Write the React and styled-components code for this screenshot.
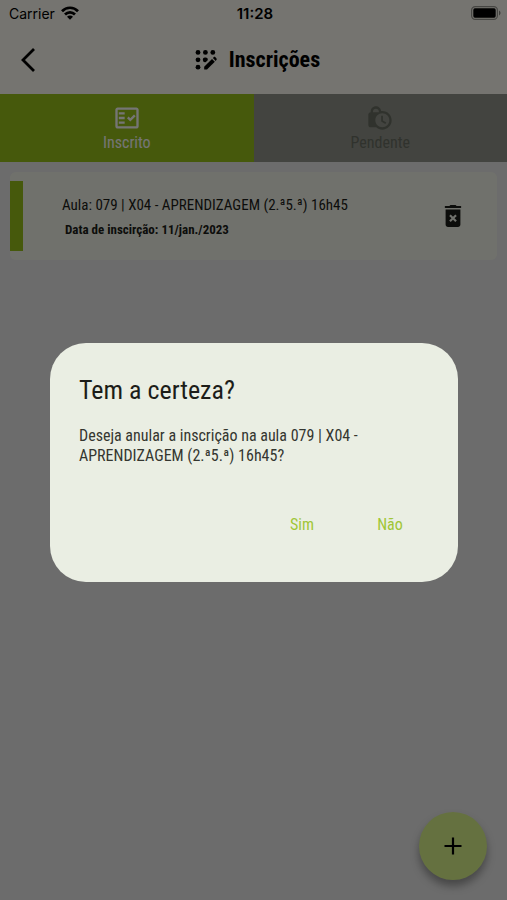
import React from 'react'
import styled, { createGlobalStyle, ThemeProvider } from 'styled-components'
import { MdLockClock, MdOutlineFactCheck } from 'react-icons/md'

const theme = {
  font: "'Roboto Condensed', 'Open Sans Condensed', 'DejaVu Sans Condensed', sans-serif",
  systemFont: "Inter, 'Liberation Sans', sans-serif",
  colors: {
    page: '#ebebeb',
    header: '#fffdf3',
    card: '#f5f7eb',
    tab: '#92958b',
    tabText: '#696e63',
    primary: '#9ac31c',
    primarySoft: '#dcf68c',
    action: '#a0c636',
    dialog: '#eaeee3',
    text: '#1c1d19',
    textSoft: '#343630',
    scrim: 'rgba(0, 0, 0, 0.54)'
  }
}

const GlobalStyle = createGlobalStyle`
  * {
    box-sizing: border-box;
  }

  body {
    margin: 0;
    background-color: ${theme.colors.page};
    color: ${theme.colors.text};
    font-family: ${theme.font};
    font-size: 16px;
  }

  h1, h2, p {
    margin: 0;
    font-weight: 400;
  }
`

const Page = styled.div`
  min-height: 100vh;
`

const Top = styled.header`
  background-color: ${props => props.theme.colors.header};
  color: #000;
`

const StatusBar = styled.div`
  display: grid;
  grid-template-columns: 1fr auto 1fr;
  align-items: center;
  height: 26px;
  padding: 0 6px 0 9px;
  font-family: ${props => props.theme.systemFont};
  font-size: 14px;
`

const Carrier = styled.span`
  display: flex;
  align-items: center;
  gap: 6px;
`

const Time = styled.span`
  font-size: 15px;
  font-weight: 600;
`

const Battery = styled.svg`
  justify-self: end;
`

const AppBar = styled.div`
  display: grid;
  grid-template-columns: 56px 1fr 48px;
  align-items: center;
  height: 68px;
`

const IconButton = styled.button`
  display: flex;
  align-items: center;
  justify-content: center;
  width: 56px;
  height: 56px;
  padding: 0;
  border: none;
  background: none;
  color: inherit;
  cursor: pointer;
`

const Title = styled.h1`
  display: flex;
  align-items: center;
  justify-content: center;
  gap: 12px;
  font-size: 22px;
  font-weight: 700;
  line-height: 32px;
`

const Tabs = styled.div`
  display: flex;
`

const Tab = styled.button`
  display: flex;
  flex: 1;
  flex-direction: column;
  align-items: center;
  justify-content: center;
  height: 68px;
  padding: 2px 0 0;
  border: none;
  font-family: inherit;
  font-size: 16px;
  line-height: 22px;
  cursor: pointer;
  background-color: ${props =>
    props.$active ? props.theme.colors.primary : props.theme.colors.tab};
  color: ${props => (props.$active ? '#fff' : props.theme.colors.tabText)};
`

const List = styled.main`
  padding: 10px;
`

const Card = styled.article`
  display: flex;
  align-items: center;
  min-height: 88px;
  padding: 9px 16px 9px 0;
  border-radius: 6px;
  background-color: ${props => props.theme.colors.card};
`

const Marker = styled.span`
  align-self: stretch;
  width: 13px;
  background-color: ${props => props.theme.colors.primary};
`

const CardBody = styled.div`
  flex: 1;
  padding: 2px 0 0 39px;
`

const Lesson = styled.p`
  font-size: 15px;
  line-height: 26px;
`

const Enrolled = styled.p`
  padding-left: 3px;
  font-size: 13px;
  font-weight: 700;
  line-height: 24px;
`

const Fab = styled.button`
  position: fixed;
  right: 20px;
  bottom: 20px;
  display: flex;
  align-items: center;
  justify-content: center;
  width: 68px;
  height: 68px;
  padding: 0;
  border: none;
  border-radius: 50%;
  background-color: ${props => props.theme.colors.primarySoft};
  color: #000;
  box-shadow: 0 6px 8px rgba(0, 0, 0, 0.35);
  cursor: pointer;
`

const Scrim = styled.div`
  position: fixed;
  inset: 0;
  display: flex;
  align-items: center;
  justify-content: center;
  padding: 25px 49px 0 50px;
  background-color: ${props => props.theme.colors.scrim};
`

const Dialog = styled.section`
  width: 100%;
  max-width: 560px;
  padding: 30px 24px 34px 29px;
  border-radius: 36px;
  background-color: ${props => props.theme.colors.dialog};
`

const DialogTitle = styled.h2`
  font-size: 26px;
  line-height: 34px;
`

const DialogText = styled.p`
  max-width: 300px;
  margin-top: 19px;
  color: ${props => props.theme.colors.textSoft};
  line-height: 20px;
`

const Actions = styled.div`
  display: flex;
  justify-content: flex-end;
  margin-top: 34px;
`

const TextButton = styled.button`
  width: 88px;
  height: 48px;
  padding: 0;
  border: none;
  background: none;
  color: ${props => props.theme.colors.action};
  font-family: inherit;
  font-size: 16px;
  cursor: pointer;
`

const WifiIcon = () => (
  <svg width="18" height="14" viewBox="0 0 18 14" fill="none" stroke="currentColor" strokeWidth="2.7" aria-hidden="true">
    <path d="M1 5.2C5.4.6 12.6.6 17 5.2" />
    <path d="M4 8.5c2.8-2.9 7.2-2.9 10 0" />
    <path d="M9 13.8 6 10.8c1.6-1.6 4.4-1.6 6 0z" fill="currentColor" stroke="none" />
  </svg>
)

const BatteryIcon = () => (
  <Battery width="30" height="14" viewBox="0 0 30 14" aria-hidden="true">
    <rect x=".6" y=".6" width="25.8" height="12.8" rx="3.6" fill="none" stroke="#000" strokeOpacity=".4" strokeWidth="1.2" />
    <rect x="2.3" y="2.3" width="22.4" height="9.4" rx="1.6" />
    <path d="M28 4.6c2 .8 2 4 0 4.8z" fillOpacity=".45" />
  </Battery>
)

const BackIcon = () => (
  <svg width="16" height="26" viewBox="0 0 16 26" fill="none" stroke="currentColor" strokeWidth="2.8" aria-hidden="true">
    <path d="M14 2 3 13l11 11" />
  </svg>
)

const RegistrationIcon = () => (
  <svg width="22" height="22" viewBox="0 0 22 22" fill="currentColor" aria-hidden="true">
    <circle cx="3" cy="3.4" r="2.4" />
    <circle cx="10.4" cy="3.4" r="2.4" />
    <circle cx="17.8" cy="3.4" r="2.4" />
    <circle cx="3" cy="10.8" r="2.4" />
    <path d="M10.4 8.4a2.4 2.4 0 0 1 2.3 2.9L10.900 13.100A2.4 2.4 0 1 1 10.4 8.4z" />
    <circle cx="3" cy="18.2" r="2.4" />
    <path d="M9.200 20.600v-2.800l7.800-7.800 2.800 2.800-7.800 7.800z" />
    <path d="M17.900 9.100 18.900 8.100c.4-.4.9-.4 1.300 0L21.500 9.400c.4.4.4.9 0 1.300L20.700 11.900z" />
  </svg>
)

const TrashIcon = () => (
  <svg width="18" height="24" viewBox="0 0 18 24" fill="currentColor" aria-hidden="true">
    <path d="M1.4 1.9h4l1-.9h5.2l1 .9h4c.9 0 .9 2.1 0 2.1H1.4c-.9 0-.9-2.1 0-2.1z" />
    <path
      fillRule="evenodd"
      d="M1.6 5.6h14.8v15c0 1.4-1 2.4-2.4 2.4H4c-1.4 0-2.4-1-2.4-2.4zM6.7 10.4l-1.5 1.5L7.5 14.2l-2.3 2.3L6.7 18 9 15.7l2.3 2.3 1.5-1.5-2.3-2.3 2.3-2.3-1.5-1.5L9 12.7z"
    />
  </svg>
)

const PlusIcon = () => (
  <svg width="18" height="18" viewBox="0 0 18 18" stroke="currentColor" strokeWidth="2.2" aria-hidden="true">
    <path d="M9 .5v17M.5 9h17" />
  </svg>
)

const App = () => (
  <ThemeProvider theme={theme}>
    <GlobalStyle />
    <Page>
      <Top>
        <StatusBar>
          <Carrier>
            Carrier
            <WifiIcon />
          </Carrier>
          <Time>11:28</Time>
          <BatteryIcon />
        </StatusBar>
        <AppBar>
          <IconButton aria-label="Voltar">
            <BackIcon />
          </IconButton>
          <Title>
            <RegistrationIcon />
            Inscrições
          </Title>
        </AppBar>
      </Top>
      <Tabs role="tablist">
        <Tab role="tab" aria-selected="true" $active>
          <MdOutlineFactCheck size={28} />
          Inscrito
        </Tab>
        <Tab role="tab" aria-selected="false">
          <MdLockClock size={28} />
          Pendente
        </Tab>
      </Tabs>
      <List>
        <Card>
          <Marker />
          <CardBody>
            <Lesson>Aula: 079 | X04 - APRENDIZAGEM (2.ª5.ª) 16h45</Lesson>
            <Enrolled>Data de inscirção: 11/jan./2023</Enrolled>
          </CardBody>
          <IconButton aria-label="Anular inscrição">
            <TrashIcon />
          </IconButton>
        </Card>
      </List>
      <Fab aria-label="Nova inscrição">
        <PlusIcon />
      </Fab>
    </Page>
    <Scrim>
      <Dialog role="alertdialog" aria-modal="true" aria-labelledby="confirm-title" aria-describedby="confirm-text">
        <DialogTitle id="confirm-title">Tem a certeza?</DialogTitle>
        <DialogText id="confirm-text">
          Deseja anular a inscrição na aula 079 | X04 - APRENDIZAGEM (2.ª5.ª) 16h45?
        </DialogText>
        <Actions>
          <TextButton>Sim</TextButton>
          <TextButton>Não</TextButton>
        </Actions>
      </Dialog>
    </Scrim>
  </ThemeProvider>
)

export default App
